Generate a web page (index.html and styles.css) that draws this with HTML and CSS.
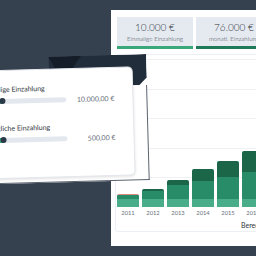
FILE: index.html
```html
<!DOCTYPE html>
<html lang="de">
<head>
    <meta charset="UTF-8">
    <meta name="viewport" content="width=device-width, initial-scale=1.0">
    <title>Sparrechner</title>
    <link rel="stylesheet" href="styles.css">
</head>
<body>
    <div class="scene">
        <!-- Rechner im Hintergrund -->
        <section class="calc">
            <div class="stats">
                <div class="stat stat-once">
                    <div class="stat-value">10.000 €</div>
                    <div class="stat-label">Einmalige Einzahlung</div>
                </div>
                <div class="stat stat-monthly">
                    <div class="stat-value">76.000 €</div>
                    <div class="stat-label">monatl. Einzahlung</div>
                </div>
            </div>
            <div class="chart-card">
                <div class="plot">
                    <div class="bar">
                        <span class="seg seg-fee" style="height:1.5px"></span>
                        <span class="seg seg-mid" style="height:4px"></span>
                        <span class="seg seg-base" style="height:8px"></span>
                    </div>
                    <div class="bar">
                        <span class="seg seg-top" style="height:2px"></span>
                        <span class="seg seg-mid" style="height:8.5px"></span>
                        <span class="seg seg-base" style="height:8px"></span>
                    </div>
                    <div class="bar">
                        <span class="seg seg-top" style="height:5px"></span>
                        <span class="seg seg-mid" style="height:14px"></span>
                        <span class="seg seg-base" style="height:8px"></span>
                    </div>
                    <div class="bar">
                        <span class="seg seg-top" style="height:12px"></span>
                        <span class="seg seg-mid" style="height:18px"></span>
                        <span class="seg seg-base" style="height:8px"></span>
                    </div>
                    <div class="bar">
                        <span class="seg seg-top" style="height:16.5px"></span>
                        <span class="seg seg-mid" style="height:22px"></span>
                        <span class="seg seg-base" style="height:8px"></span>
                    </div>
                    <div class="bar">
                        <span class="seg seg-top" style="height:21px"></span>
                        <span class="seg seg-mid" style="height:27px"></span>
                        <span class="seg seg-base" style="height:8px"></span>
                    </div>
                </div>
                <div class="years">
                    <span>2011</span><span>2012</span><span>2013</span>
                    <span>2014</span><span>2015</span><span>2016</span>
                </div>
                <div class="chart-foot">Berechnungsgrundlage</div>
            </div>
        </section>

        <!-- Eingabefenster im Vordergrund -->
        <div class="device">
            <div class="device-bar"><span class="notch"></span></div>
            <div class="device-body"></div>
            <div class="card">
                <div class="field">
                    <div class="field-label">Einmalige Einzahlung</div>
                    <div class="field-row">
                        <div class="slider"><span class="slider-fill"></span><span class="slider-knob"></span></div>
                        <div class="field-value">10.000,00 €</div>
                    </div>
                </div>
                <div class="field">
                    <div class="field-label">monatliche Einzahlung</div>
                    <div class="field-row">
                        <div class="slider"><span class="slider-fill"></span><span class="slider-knob"></span></div>
                        <div class="field-value">500,00 €</div>
                    </div>
                </div>
            </div>
        </div>
    </div>
</body>
</html>
```

FILE: styles.css
```css
/* Grundlayout */
body, html {
    margin: 0;
    padding: 0;
    height: 100%;
    overflow: hidden;
    font-family: Lato, "Noto Sans", sans-serif;
    background: #36414f;
    color: #353b44;
}

.scene {
    position: relative;
    width: 256px;
    height: 256px;
}

/* Rechner-Panel hinten */
.calc {
    position: absolute;
    left: 111px;
    top: 10px;
    width: 170px;
    height: 236px;
    background: #fff;
    box-sizing: border-box;
    padding: 7px 0 0 4px;
}

.stats {
    display: grid;
    grid-template-columns: 76px 76px;
    gap: 3px;
    margin-left: 2px;
}

.stat {
    height: 29px;
    background: #e5eaf1;
    border-bottom: 3px solid #3ba87c;
    display: flex;
    flex-direction: column;
    align-items: center;
    justify-content: center;
    gap: 3px;
}

.stat-monthly {
    border-bottom-color: #1f7a59;
}

.stat-value {
    font-size: 10px;
    line-height: 10px;
    font-weight: 300;
    color: #2f353d;
}

.stat-label {
    font-size: 6.2px;
    line-height: 7px;
    font-weight: 300;
    color: #3f4650;
    white-space: nowrap;
}

/* Diagramm */
.chart-card {
    margin: 5px 0 0 0;
    border: 1px solid #eceff3;
    border-radius: 3px;
    height: 178px;
    box-sizing: border-box;
    padding-top: 4px;
}

.plot {
    height: 148px;
    display: flex;
    align-items: flex-end;
    gap: 3px;
    padding-left: 1px;
    background: repeating-linear-gradient(to bottom, #eef0f3 0 1px, transparent 1px 29.6px);
}

.bar {
    width: 22px;
    display: flex;
    flex-direction: column;
    border-radius: 2px 2px 0 0;
    overflow: hidden;
}

.seg {
    display: block;
}

.seg-fee { background: #d98a80; }
.seg-top { background: #1b6549; }
.seg-mid { background: #288c68; }
.seg-base { background: #48ad88; }

.years {
    display: flex;
    gap: 3px;
    padding-left: 1px;
    height: 10px;
    align-items: center;
}

.years span {
    width: 22px;
    text-align: center;
    font-size: 5.8px;
    color: #6a717b;
}

.chart-foot {
    padding: 4px 0 0 125px;
    font-size: 7px;
    color: #2f353d;
    white-space: nowrap;
}

/* Eingabefenster vorne, leicht gedreht */
.device {
    position: absolute;
    left: -70px;
    top: 57px;
    width: 218px;
    height: 126px;
    transform: rotate(-1.6deg);
    display: flex;
    flex-direction: column;
}

.device-bar {
    height: 31px;
    margin-left: 120px;
    background: #222d3c;
    clip-path: polygon(0 0, 100% 0, 100% 75%, 92% 100%, 0 100%);
}

.notch {
    display: block;
    width: 33px;
    height: 12px;
    background: #151d29;
    clip-path: polygon(0 0, 100% 0, 72% 100%, 20% 100%);
}

.device-body {
    flex: 1;
    background: #fff;
    border-right: 1.5px solid #5c6470;
    border-bottom: 1.5px solid #5c6470;
}

.card {
    position: absolute;
    top: 12px;
    left: 10px;
    right: 14px;
    bottom: 5px;
    background: #fff;
    border: 1px solid #e4e7ec;
    border-radius: 5px;
    box-shadow: 0 1px 3px rgba(0, 0, 0, 0.12);
    box-sizing: border-box;
    padding: 14px 18px 0 40px;
    display: flex;
    flex-direction: column;
    gap: 19px;
}

.field-label {
    font-size: 7px;
    line-height: 8px;
    color: #2f353d;
    white-space: nowrap;
}

.field-row {
    display: flex;
    align-items: center;
    justify-content: space-between;
    margin-top: 4px;
}

.slider {
    position: relative;
    width: 86px;
    height: 5px;
    border-radius: 3px;
    background: #e3e8ef;
    display: flex;
    align-items: center;
}

.slider-fill {
    width: 23px;
    height: 5px;
    border-radius: 3px;
    background: #3ba87c;
}

.slider-knob {
    width: 6px;
    height: 6px;
    margin-left: -4px;
    border-radius: 50%;
    background: #2b3847;
}

.field-value {
    font-size: 7px;
    color: #6b727c;
    white-space: nowrap;
}
```
